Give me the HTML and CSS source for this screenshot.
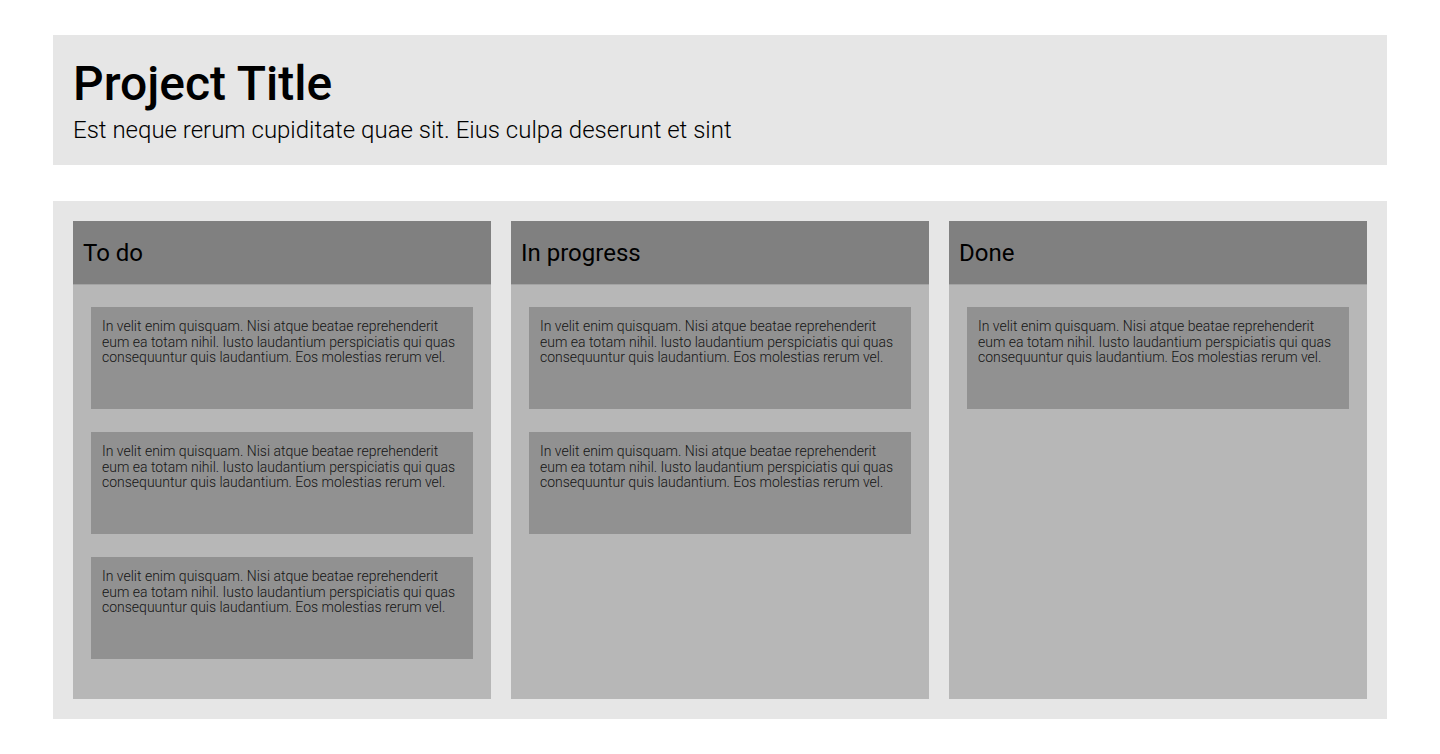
FILE: index.html
```html
<!DOCTYPE html>
<html>
  <head>
    <title>Project Title</title>
    <link rel="stylesheet" href="styles.css">
  </head>
  <body>
    <div class="page">
      <!-- cabecera del proyecto -->
      <header class="project-header">
        <h1 class="project-title">Project Title</h1>
        <p class="project-subtitle">Est neque rerum cupiditate quae sit. Eius culpa deserunt et sint</p>
      </header>
      <!-- tablero con las columnas -->
      <div class="board">
        <div class="column">
          <div class="column-header">To do</div>
          <div class="column-body">
            <div class="card">In velit enim quisquam. Nisi atque beatae reprehenderit eum ea totam nihil. Iusto laudantium perspiciatis qui quas consequuntur quis laudantium. Eos molestias rerum vel.</div>
            <div class="card">In velit enim quisquam. Nisi atque beatae reprehenderit eum ea totam nihil. Iusto laudantium perspiciatis qui quas consequuntur quis laudantium. Eos molestias rerum vel.</div>
            <div class="card">In velit enim quisquam. Nisi atque beatae reprehenderit eum ea totam nihil. Iusto laudantium perspiciatis qui quas consequuntur quis laudantium. Eos molestias rerum vel.</div>
          </div>
        </div>
        <div class="column">
          <div class="column-header">In progress</div>
          <div class="column-body">
            <div class="card">In velit enim quisquam. Nisi atque beatae reprehenderit eum ea totam nihil. Iusto laudantium perspiciatis qui quas consequuntur quis laudantium. Eos molestias rerum vel.</div>
            <div class="card">In velit enim quisquam. Nisi atque beatae reprehenderit eum ea totam nihil. Iusto laudantium perspiciatis qui quas consequuntur quis laudantium. Eos molestias rerum vel.</div>
          </div>
        </div>
        <div class="column">
          <div class="column-header">Done</div>
          <div class="column-body">
            <div class="card">In velit enim quisquam. Nisi atque beatae reprehenderit eum ea totam nihil. Iusto laudantium perspiciatis qui quas consequuntur quis laudantium. Eos molestias rerum vel.</div>
          </div>
        </div>
      </div>
    </div>
  </body>
</html>
```

FILE: styles.css
```css
body {
  margin: 0;
  font-family: Roboto, "Liberation Sans", sans-serif;
  background-color: #ffffff;
  color: #000000;
}

.page {
  padding: 35px 53px;
}

.project-header {
  background-color: #e6e6e6;
  padding: 20px 20px 21px;
}

.project-title {
  margin: 0;
  font-size: 48px;
  font-weight: 500;
  line-height: normal;
}

.project-subtitle {
  margin: 4px 0 0;
  font-size: 24px;
  font-weight: 300;
  line-height: 28px;
}

.board {
  display: flex;
  gap: 20px;
  margin-top: 36px;
  padding: 20px;
  background-color: #e6e6e6;
}

.column {
  flex: 1;
  height: 478px;
  display: flex;
  flex-direction: column;
  background-color: #b7b7b7;
}

.column-header {
  height: 63px;
  display: flex;
  align-items: center;
  padding: 0 10px;
  font-size: 24px;
  background-color: #808080;
  border-bottom: 1px solid #a3a3a3;
}

.column-body {
  display: flex;
  flex-direction: column;
  gap: 23px;
  padding: 22px 18px;
}

.card {
  box-sizing: border-box;
  height: 102px;
  padding: 12px 11px;
  background-color: #919191;
  font-size: 14px;
  font-weight: 300;
  line-height: 15.6px;
  color: #141414;
}
```
